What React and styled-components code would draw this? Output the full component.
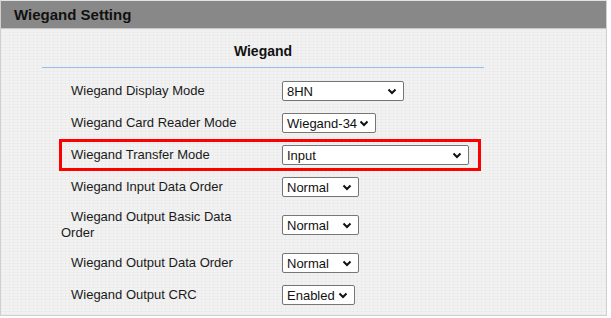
import React from 'react';
import styled, { createGlobalStyle } from 'styled-components';

const GlobalStyle = createGlobalStyle`
body {
    margin: 0;
    background: #ffffff;
    font-family: 'Liberation Sans', Arial, sans-serif;
}
`

const Panel = styled.div`
width: 605px;
border: 1px solid #d0d0d0;
border-top: 1px solid #e2e2e2;
background-color: #f2f2f2;
background-image:
    repeating-linear-gradient(0deg, rgba(0,0,0,0.018) 0 1px, transparent 1px 3px),
    repeating-linear-gradient(90deg, rgba(0,0,0,0.018) 0 1px, transparent 1px 4px);
height: 314px;
box-sizing: content-box;
`

const Header = styled.div`
height: 27px;
line-height: 28px;
background-color: #888888;
border-bottom: 1px solid #c9c9c9;
padding-left: 13px;
font-size: 15px;
font-weight: bold;
color: #111111;
`

const Section = styled.div`
width: 442px;
margin-left: 41px;
`

const SectionTitle = styled.h2`
margin: 0;
height: 30px;
line-height: 28px;
padding-top: 8px;
text-align: center;
font-size: 14px;
font-weight: bold;
color: #111111;
border-bottom: 1px solid #98bdee;
`

const Form = styled.div`
display: flex;
flex-direction: column;
margin-top: 7px;
margin-left: 17px;
width: 422px;
`

const Row = styled.div`
display: flex;
align-items: center;
min-height: 32px;
padding: 6px 0 6px 2px;
box-sizing: border-box;
box-shadow: ${p => (p.$highlight ? 'inset 0 0 0 3px #ff0000' : 'none')};
`

const Label = styled.div`
width: 200px;
margin-right: 21px;
text-indent: 10px;
font-size: 13px;
line-height: 16px;
color: #1a1a1a;
`

const Select = styled.div`
display: flex;
align-items: center;
justify-content: space-between;
width: ${p => p.$width}px;
height: 20px;
box-sizing: border-box;
padding: 0 6px 0 4px;
background: #ffffff;
border: 1px solid #767676;
border-radius: 2px;
font-size: 13px;
color: #111111;
`

const Chevron = () => (
  <svg width="10" height="7" viewBox="0 0 10 7">
    <path d="M1.5 1.5 L5 5 L8.5 1.5" fill="none" stroke="#111" strokeWidth="2" />
  </svg>
)

const rows = [
  { label: 'Wiegand Display Mode', value: '8HN', width: 122 },
  { label: 'Wiegand Card Reader Mode', value: 'Wiegand-34', width: 94 },
  { label: 'Wiegand Transfer Mode', value: 'Input', width: 187, highlight: true },
  { label: 'Wiegand Input Data Order', value: 'Normal', width: 77 },
  { label: 'Wiegand Output Basic Data Order', value: 'Normal', width: 77 },
  { label: 'Wiegand Output Data Order', value: 'Normal', width: 77 },
  { label: 'Wiegand Output CRC', value: 'Enabled', width: 73 },
]

const App = () => {
  return (
    <>
      <GlobalStyle />
      <Panel>
        <Header>Wiegand Setting</Header>
        <Section>
          <SectionTitle>Wiegand</SectionTitle>
          <Form>
            {rows.map(r => (
              <Row key={r.label} $highlight={r.highlight}>
                <Label>{r.label}</Label>
                <Select $width={r.width}>
                  <span>{r.value}</span>
                  <Chevron />
                </Select>
              </Row>
            ))}
          </Form>
        </Section>
      </Panel>
    </>
  )
}

export default App
